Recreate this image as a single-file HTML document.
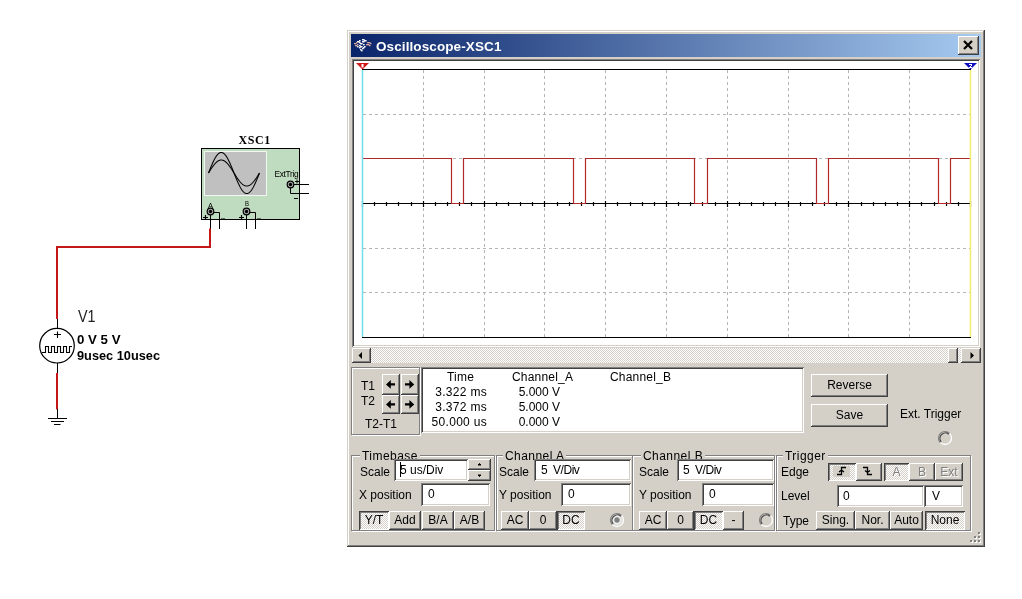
<!DOCTYPE html>
<html><head><meta charset="utf-8"><style>
html,body{margin:0;padding:0;background:#fff;width:1022px;height:599px;overflow:hidden;position:relative;}
.btn,.prs,.sunk,.etch,.dith,.lbl{position:absolute;box-sizing:border-box;}
.btn{background:#d4d0c8;box-shadow:inset -1px -1px #404040, inset 1px 1px #fff, inset -2px -2px #808080;}
.prs{background-color:#e8e6e0;background-image:repeating-conic-gradient(#fff 0 25%, #d4d0c8 0 50%);background-size:2px 2px;box-shadow:inset 1px 1px #404040, inset -1px -1px #fff, inset 2px 2px #808080;}
.dith{background-image:repeating-conic-gradient(#fff 0 25%, #d4d0c8 0 50%);background-size:2px 2px;}
.sunk{background:#fff;box-shadow:inset 1px 1px #808080, inset -1px -1px #fff, inset 2px 2px #404040, inset -2px -2px #d4d0c8;}
.etch{border:1px solid #808080;box-shadow:1px 1px #fff, inset 1px 1px #fff;}
.lbl{will-change:transform;font-family:'Liberation Sans', sans-serif;font-size:12px;line-height:15px;color:#000;white-space:nowrap;}
</style></head><body>
<svg style="position:absolute;left:0;top:0;will-change:transform" width="1022" height="599"><text x="238.5" y="144" font-family="Liberation Serif" font-weight="bold" font-size="12" letter-spacing="0.6" fill="#000">XSC1</text><rect x="201" y="148" width="99" height="72" fill="#c0dcc0"/><rect x="204" y="151" width="63" height="45" fill="#f0f8f0"/><rect x="205" y="152" width="61" height="43" fill="#c0c0c0"/><path d="M208.50,173.00 L209.00,171.74 L209.50,170.48 L210.00,169.23 L210.50,168.00 L211.00,166.79 L211.50,165.59 L212.00,164.43 L212.50,163.30 L213.00,162.21 L213.50,161.16 L214.00,160.15 L214.50,159.19 L215.00,158.28 L215.50,157.43 L216.00,156.64 L216.50,155.91 L217.00,155.25 L217.50,154.65 L218.00,154.12 L218.50,153.67 L219.00,153.28 L219.50,152.97 L220.00,152.74 L220.50,152.59 L221.00,152.51 L221.50,152.51 L222.00,152.59 L222.50,152.74 L223.00,152.97 L223.50,153.28 L224.00,153.67 L224.50,154.12 L225.00,154.65 L225.50,155.25 L226.00,155.91 L226.50,156.64 L227.00,157.43 L227.50,158.28 L228.00,159.19 L228.50,160.15 L229.00,161.16 L229.50,162.21 L230.00,163.30 L230.50,164.43 L231.00,165.59 L231.50,166.79 L232.00,168.00 L232.50,169.23 L233.00,170.48 L233.50,171.74 L234.00,173.00 L234.50,174.26 L235.00,175.52 L235.50,176.77 L236.00,178.00 L236.50,179.21 L237.00,180.41 L237.50,181.57 L238.00,182.70 L238.50,183.79 L239.00,184.84 L239.50,185.85 L240.00,186.81 L240.50,187.72 L241.00,188.57 L241.50,189.36 L242.00,190.09 L242.50,190.75 L243.00,191.35 L243.50,191.88 L244.00,192.33 L244.50,192.72 L245.00,193.03 L245.50,193.26 L246.00,193.41 L246.50,193.49 L247.00,193.49 L247.50,193.41 L248.00,193.26 L248.50,193.03 L249.00,192.72 L249.50,192.33 L250.00,191.88 L250.50,191.35 L251.00,190.75 L251.50,190.09 L252.00,189.36 L252.50,188.57 L253.00,187.72 L253.50,186.81 L254.00,185.85 L254.50,184.84 L255.00,183.79 L255.50,182.70 L256.00,181.57 L256.50,180.41 L257.00,179.21 L257.50,178.00 L258.00,176.77 L258.50,175.52 L259.00,174.26 L259.50,173.00" fill="none" stroke="#000" stroke-width="1.05"/><path d="M208.50,173.00 L209.00,172.20 L209.50,171.40 L210.00,170.61 L210.50,169.83 L211.00,169.06 L211.50,168.30 L212.00,167.57 L212.50,166.85 L213.00,166.16 L213.50,165.49 L214.00,164.85 L214.50,164.24 L215.00,163.67 L215.50,163.13 L216.00,162.63 L216.50,162.16 L217.00,161.74 L217.50,161.36 L218.00,161.03 L218.50,160.74 L219.00,160.50 L219.50,160.30 L220.00,160.15 L220.50,160.06 L221.00,160.01 L221.50,160.01 L222.00,160.06 L222.50,160.15 L223.00,160.30 L223.50,160.50 L224.00,160.74 L224.50,161.03 L225.00,161.36 L225.50,161.74 L226.00,162.16 L226.50,162.63 L227.00,163.13 L227.50,163.67 L228.00,164.24 L228.50,164.85 L229.00,165.49 L229.50,166.16 L230.00,166.85 L230.50,167.57 L231.00,168.30 L231.50,169.06 L232.00,169.83 L232.50,170.61 L233.00,171.40 L233.50,172.20 L234.00,173.00 L234.50,173.80 L235.00,174.60 L235.50,175.39 L236.00,176.17 L236.50,176.94 L237.00,177.70 L237.50,178.43 L238.00,179.15 L238.50,179.84 L239.00,180.51 L239.50,181.15 L240.00,181.76 L240.50,182.33 L241.00,182.87 L241.50,183.37 L242.00,183.84 L242.50,184.26 L243.00,184.64 L243.50,184.97 L244.00,185.26 L244.50,185.50 L245.00,185.70 L245.50,185.85 L246.00,185.94 L246.50,185.99 L247.00,185.99 L247.50,185.94 L248.00,185.85 L248.50,185.70 L249.00,185.50 L249.50,185.26 L250.00,184.97 L250.50,184.64 L251.00,184.26 L251.50,183.84 L252.00,183.37 L252.50,182.87 L253.00,182.33 L253.50,181.76 L254.00,181.15 L254.50,180.51 L255.00,179.84 L255.50,179.15 L256.00,178.43 L256.50,177.70 L257.00,176.94 L257.50,176.17 L258.00,175.39 L258.50,174.60 L259.00,173.80 L259.50,173.00" fill="none" stroke="#000" stroke-width="1.05"/><text x="274.5" y="176.7" font-family="Liberation Sans" font-size="8.3" fill="#000" letter-spacing="-0.3">ExtTrig</text><rect x="201.5" y="148.5" width="98" height="71" fill="none" stroke="#000" stroke-width="1"/><path d="M210.5,211 V229 M213,212.5 H219.5 V229 M246.5,211 V229 M249,212.5 H255.5 V229" stroke="#000" stroke-width="1" fill="none"/><circle cx="210.5" cy="211.5" r="3.3" fill="#a8a8a8" stroke="#000" stroke-width="1.2"/><circle cx="210.5" cy="211.5" r="1.7" fill="#000"/><circle cx="246.5" cy="211.5" r="3.3" fill="#a8a8a8" stroke="#000" stroke-width="1.2"/><circle cx="246.5" cy="211.5" r="1.7" fill="#000"/><path d="M203,217.5 H208 M205.5,215 V220 M221,219 H225 M239,217.5 H244 M241.5,215 V220 M257,219 H261" stroke="#000" stroke-width="1.2"/><text x="208" y="207.5" font-family="Liberation Sans" font-size="7.5" fill="#000">A</text><text x="245" y="206.5" font-family="Liberation Sans" font-size="7.5" fill="#000" transform="translate(245,206.5) scale(0.8,1) translate(-245,-206.5)">B</text><path d="M293,184.5 H309 M290.5,184 V193.5 H309 M294,198.5 H298 M295,181.5 H299 M297,179.5 V183.5" stroke="#000" stroke-width="1" fill="none"/><circle cx="290.5" cy="184.5" r="3.3" fill="#a8a8a8" stroke="#000" stroke-width="1.2"/><circle cx="290.5" cy="184.5" r="1.7" fill="#000"/><path d="M57,319 V247 H210 V228.5" stroke="#c41818" stroke-width="2" fill="none"/><path d="M57,373 V409.5" stroke="#c41818" stroke-width="2" fill="none"/><path d="M57.5,319 V329 M57.5,363 V373 M57.5,409 V418.5 M48,418.5 H67 M51,421.5 H64 M54,424.5 H60.5" stroke="#000" stroke-width="1" fill="none"/><circle cx="57" cy="345.7" r="17.3" fill="#fff" stroke="#000" stroke-width="1.2"/><path d="M54,334.5 H61 M57.5,331.5 V338" stroke="#000" stroke-width="1.1"/><path d="M42,352.5 H45.5 V346.5 H48.5 V352.5 H51.5 V346.5 H54.5 V352.5 H57.5 V346.5 H60.5 V352.5 H63.5 V346.5 H66.5 V352.5 H69.5 V346.5 H72" stroke="#000" stroke-width="1.1" fill="none"/><text x="78" y="322" font-family="Liberation Sans" font-size="16.5" fill="#222" textLength="17.5" lengthAdjust="spacingAndGlyphs">V1</text><text x="77" y="343.5" font-family="Liberation Sans" font-weight="bold" font-size="13.5" fill="#000" textLength="43.5" lengthAdjust="spacingAndGlyphs">0 V 5 V</text><text x="77" y="359.5" font-family="Liberation Sans" font-weight="bold" font-size="13.5" fill="#000" textLength="83" lengthAdjust="spacingAndGlyphs">9usec 10usec</text></svg>
<div style="position:absolute;left:347px;top:30px;width:638px;height:517px;background:#d4d0c8;box-shadow:inset -1px -1px #404040, inset 1px 1px #d4d0c8, inset -2px -2px #808080, inset 2px 2px #fff;"></div>
<div style="position:absolute;left:351px;top:34px;width:630px;height:23px;background:linear-gradient(to right,#0a246a,#a6caf0);"></div>
<div style="will-change:transform;position:absolute;left:376px;top:35.5px;height:22px;line-height:22px;font-family:'Liberation Sans', sans-serif;font-size:13.5px;font-weight:bold;letter-spacing:0.1px;color:#fff;white-space:nowrap;">Oscilloscope-XSC1</div>
<svg style="position:absolute;left:352px;top:36px" width="24" height="18"><rect x="10" y="3" width="1.6" height="1.4" fill="#fff"/><rect x="11" y="3" width="1.6" height="1.4" fill="#fff"/><rect x="5" y="5" width="1.6" height="1.4" fill="#fff"/><rect x="6" y="5" width="1.6" height="1.4" fill="#fff"/><rect x="7" y="4" width="1.6" height="1.4" fill="#fff"/><rect x="10" y="5" width="1.6" height="1.4" fill="#fff"/><rect x="11" y="5" width="1.6" height="1.4" fill="#fff"/><rect x="12" y="4" width="1.6" height="1.4" fill="#fff"/><rect x="13" y="4" width="1.6" height="1.4" fill="#fff"/><rect x="7" y="6" width="1.6" height="1.4" fill="#fff"/><rect x="8" y="7" width="1.6" height="1.4" fill="#fff"/><rect x="9" y="7" width="1.6" height="1.4" fill="#fff"/><rect x="11" y="8" width="1.6" height="1.4" fill="#fff"/><rect x="7" y="9" width="1.6" height="1.4" fill="#fff"/><rect x="5" y="10" width="1.6" height="1.4" fill="#fff"/><rect x="8" y="10" width="1.6" height="1.4" fill="#fff"/><rect x="9" y="10" width="1.6" height="1.4" fill="#fff"/><rect x="12" y="10" width="1.6" height="1.4" fill="#fff"/><rect x="7" y="11" width="1.6" height="1.4" fill="#fff"/><rect x="10" y="12" width="1.6" height="1.4" fill="#fff"/><rect x="11" y="11" width="1.6" height="1.4" fill="#fff"/><rect x="8" y="13" width="1.6" height="1.4" fill="#fff"/><rect x="9" y="14" width="1.6" height="1.4" fill="#fff"/><rect x="2" y="7" width="1.5" height="1.3" fill="#d8a8a0"/><rect x="3" y="7" width="1.5" height="1.3" fill="#d8a8a0"/><rect x="4" y="6" width="1.5" height="1.3" fill="#d8a8a0"/><rect x="5" y="8" width="1.5" height="1.3" fill="#d8a8a0"/><rect x="3" y="9" width="1.5" height="1.3" fill="#d8a8a0"/><rect x="4" y="9" width="1.5" height="1.3" fill="#d8a8a0"/><rect x="15" y="6" width="1.5" height="1.3" fill="#d8a8a0"/><rect x="16" y="6" width="1.5" height="1.3" fill="#d8a8a0"/><rect x="17" y="6" width="1.5" height="1.3" fill="#d8a8a0"/><rect x="18" y="7" width="1.5" height="1.3" fill="#d8a8a0"/><rect x="14" y="8" width="1.5" height="1.3" fill="#d8a8a0"/><rect x="15" y="8" width="1.5" height="1.3" fill="#d8a8a0"/><rect x="16" y="8" width="1.5" height="1.3" fill="#d8a8a0"/><rect x="17" y="9" width="1.5" height="1.3" fill="#d8a8a0"/></svg>
<div class="btn" style="left:958px;top:36px;width:21px;height:19px;"></div>
<svg style="position:absolute;left:958px;top:36px" width="21" height="19"><path d="M6,5 L14,13 M14,5 L6,13" stroke="#000" stroke-width="2.2"/></svg>
<div class="sunk" style="left:352px;top:59px;width:628px;height:288px;"></div>
<svg style="position:absolute;left:0;top:0" width="1022" height="599"><line x1="423.5" y1="70" x2="423.5" y2="337" stroke="#b4b4b4" stroke-width="1" stroke-dasharray="3,3"/><line x1="484.5" y1="70" x2="484.5" y2="337" stroke="#b4b4b4" stroke-width="1" stroke-dasharray="3,3"/><line x1="544.5" y1="70" x2="544.5" y2="337" stroke="#b4b4b4" stroke-width="1" stroke-dasharray="3,3"/><line x1="605.5" y1="70" x2="605.5" y2="337" stroke="#b4b4b4" stroke-width="1" stroke-dasharray="3,3"/><line x1="666.5" y1="70" x2="666.5" y2="337" stroke="#b4b4b4" stroke-width="1" stroke-dasharray="3,3"/><line x1="727.5" y1="70" x2="727.5" y2="337" stroke="#b4b4b4" stroke-width="1" stroke-dasharray="3,3"/><line x1="788.5" y1="70" x2="788.5" y2="337" stroke="#b4b4b4" stroke-width="1" stroke-dasharray="3,3"/><line x1="848.5" y1="70" x2="848.5" y2="337" stroke="#b4b4b4" stroke-width="1" stroke-dasharray="3,3"/><line x1="909.5" y1="70" x2="909.5" y2="337" stroke="#b4b4b4" stroke-width="1" stroke-dasharray="3,3"/><line x1="363" y1="114.5" x2="970" y2="114.5" stroke="#b4b4b4" stroke-width="1" stroke-dasharray="3,3"/><line x1="363" y1="158.5" x2="970" y2="158.5" stroke="#b4b4b4" stroke-width="1" stroke-dasharray="3,3"/><line x1="363" y1="248.5" x2="970" y2="248.5" stroke="#b4b4b4" stroke-width="1" stroke-dasharray="3,3"/><line x1="363" y1="292.5" x2="970" y2="292.5" stroke="#b4b4b4" stroke-width="1" stroke-dasharray="3,3"/><line x1="362" y1="69.5" x2="971" y2="69.5" stroke="#000" stroke-width="1"/><line x1="362" y1="337.5" x2="971" y2="337.5" stroke="#000" stroke-width="1"/><line x1="362" y1="203.5" x2="971" y2="203.5" stroke="#000" stroke-width="1"/><path d="M362.5,201 V207 M374.5,202 V206 M386.5,202 V206 M398.5,202 V206 M411.5,202 V206 M423.5,201 V207 M435.5,202 V206 M447.5,202 V206 M459.5,202 V206 M471.5,202 V206 M484.5,201 V207 M496.5,202 V206 M508.5,202 V206 M520.5,202 V206 M532.5,202 V206 M544.5,201 V207 M557.5,202 V206 M569.5,202 V206 M581.5,202 V206 M593.5,202 V206 M605.5,201 V207 M617.5,202 V206 M630.5,202 V206 M642.5,202 V206 M654.5,202 V206 M666.5,201 V207 M678.5,202 V206 M690.5,202 V206 M702.5,202 V206 M715.5,202 V206 M727.5,201 V207 M739.5,202 V206 M751.5,202 V206 M763.5,202 V206 M775.5,202 V206 M788.5,201 V207 M800.5,202 V206 M812.5,202 V206 M824.5,202 V206 M836.5,202 V206 M848.5,201 V207 M861.5,202 V206 M873.5,202 V206 M885.5,202 V206 M897.5,202 V206 M909.5,201 V207 M921.5,202 V206 M934.5,202 V206 M946.5,202 V206 M958.5,202 V206 M970.5,201 V207" stroke="#000" stroke-width="1.2"/><path d="M363,158.5 H451.5 V203.5 H463.5 V158.5 H573.5 V203.5 H585.5 V158.5 H694.5 V203.5 H707.5 V158.5 H816.5 V203.5 H828.5 V158.5 H938.5 V203.5 H950.5 V158.5 H970" stroke="#b02828" stroke-width="1.2" fill="none"/><line x1="362.5" y1="70" x2="362.5" y2="337" stroke="#70e0e8" stroke-width="1.5"/><line x1="970.5" y1="70" x2="970.5" y2="337" stroke="#f4ec70" stroke-width="1.5"/><path d="M356,63 H369 L362.5,69.5 Z" fill="#d01818"/><rect x="361.5" y="64" width="2" height="3.5" fill="#fff"/><path d="M964,63 H977 L970.5,69.5 Z" fill="#1010c0"/><path d="M969,64.5 H972 M971.5,64.5 V66 M970.5,66 V67 M969,67.5 H972" stroke="#fff" stroke-width="1"/></svg>
<div class="dith" style="left:352px;top:348px;width:629px;height:15px;"></div>
<div class="btn" style="left:352px;top:348px;width:19px;height:15px;"></div>
<svg style="position:absolute;left:352px;top:348px" width="19" height="15"><path d="M6.5,7.5 L10,4 V11 Z" fill="#000"/></svg>
<div class="btn" style="left:948px;top:348px;width:10px;height:15px;"></div>
<div class="btn" style="left:961px;top:348px;width:20px;height:15px;"></div>
<svg style="position:absolute;left:961px;top:348px" width="20" height="15"><path d="M13,7.5 L9.5,4 V11 Z" fill="#000"/></svg>
<div class="etch" style="left:351px;top:367px;width:69px;height:68px;"></div>
<div class="lbl" style="left:361px;top:379px;">T1</div>
<div class="lbl" style="left:361px;top:394px;">T2</div>
<div class="lbl" style="left:365px;top:417px;">T2-T1</div>
<div class="btn" style="left:382px;top:374px;width:18px;height:21px;"></div>
<svg style="position:absolute;left:382px;top:374px" width="19" height="20"><path d="M4,10.4 L8.8,6 V9.2 H13 V11.6 H8.8 V14.8 Z" fill="#000"/></svg>
<div class="btn" style="left:401px;top:374px;width:18px;height:21px;"></div>
<svg style="position:absolute;left:401px;top:374px" width="19" height="20"><path d="M13.2,10.4 L8.4,6 V9.2 H4 V11.6 H8.4 V14.8 Z" fill="#000"/></svg>
<div class="btn" style="left:382px;top:395px;width:18px;height:19px;"></div>
<svg style="position:absolute;left:382px;top:394px" width="19" height="20"><path d="M4,10.4 L8.8,6 V9.2 H13 V11.6 H8.8 V14.8 Z" fill="#000"/></svg>
<div class="btn" style="left:401px;top:395px;width:18px;height:19px;"></div>
<svg style="position:absolute;left:401px;top:394px" width="19" height="20"><path d="M13.2,10.4 L8.4,6 V9.2 H4 V11.6 H8.4 V14.8 Z" fill="#000"/></svg>
<div class="sunk" style="left:421px;top:367px;width:383px;height:66px;"></div>
<div class="lbl" style="left:447px;top:370px;letter-spacing:0.2px;">Time</div>
<div class="lbl" style="left:512px;top:370px;letter-spacing:0.2px;">Channel_A</div>
<div class="lbl" style="left:610px;top:370px;letter-spacing:0.2px;">Channel_B</div>
<div class="lbl" style="left:336.5px;width:150px;text-align:right;top:385px;letter-spacing:0.3px;">3.322 ms</div>
<div class="lbl" style="left:410px;width:150px;text-align:right;top:385px;">5.000 V</div>
<div class="lbl" style="left:336.5px;width:150px;text-align:right;top:400px;letter-spacing:0.3px;">3.372 ms</div>
<div class="lbl" style="left:410px;width:150px;text-align:right;top:400px;">5.000 V</div>
<div class="lbl" style="left:336.5px;width:150px;text-align:right;top:415px;letter-spacing:0.3px;">50.000 us</div>
<div class="lbl" style="left:410px;width:150px;text-align:right;top:415px;">0.000 V</div>
<div class="btn" style="left:811px;top:374px;width:77px;height:23px;"></div>
<div class="lbl" style="left:811px;top:374px;width:77px;height:23px;line-height:23px;text-align:center;color:#000;">Reverse</div>
<div class="btn" style="left:811px;top:404px;width:77px;height:23px;"></div>
<div class="lbl" style="left:811px;top:404px;width:77px;height:23px;line-height:23px;text-align:center;color:#000;">Save</div>
<div class="lbl" style="left:900px;top:407px;">Ext. Trigger</div>
<svg style="position:absolute;left:937px;top:430px" width="16" height="16"><path d="M3.4,12.6 A6.5,6.5 0 0 1 12.6,3.4" stroke="#808080" stroke-width="1.2" fill="none"/><path d="M4.2,11.8 A5.4,5.4 0 0 1 11.8,4.2" stroke="#404040" stroke-width="1.2" fill="none"/><path d="M12.6,3.4 A6.5,6.5 0 0 1 3.4,12.6" stroke="#fff" stroke-width="1.3" fill="none"/></svg>
<div class="etch" style="left:351px;top:455px;width:144px;height:76px;"></div>
<div class="lbl" style="left:360px;top:449px;padding:0 2px;background:#d4d0c8;letter-spacing:0.45px;">Timebase</div>
<div class="etch" style="left:496px;top:455px;width:137px;height:76px;"></div>
<div class="lbl" style="left:503px;top:449px;padding:0 2px;background:#d4d0c8;letter-spacing:0.45px;">Channel A</div>
<div class="etch" style="left:632px;top:455px;width:143px;height:76px;"></div>
<div class="lbl" style="left:641px;top:449px;padding:0 2px;background:#d4d0c8;letter-spacing:0.45px;">Channel B</div>
<div class="etch" style="left:776px;top:455px;width:195px;height:76px;"></div>
<div class="lbl" style="left:783px;top:449px;padding:0 2px;background:#d4d0c8;letter-spacing:0.45px;">Trigger</div>
<div class="lbl" style="left:360px;top:465px;">Scale</div>
<div class="sunk" style="left:394px;top:459px;width:74px;height:22px;"></div>
<div class="lbl" style="left:400px;top:463px;">5 us/Div</div>
<div style="position:absolute;left:400px;top:462px;width:1px;height:15px;background:#000"></div>
<div class="btn" style="left:468px;top:459px;width:23px;height:11px;"></div>
<div class="btn" style="left:468px;top:470px;width:23px;height:11px;"></div>
<svg style="position:absolute;left:468px;top:459px" width="23" height="22"><path d="M10,6 H13 L11.5,4.5Z M10,16 H13 L11.5,17.5Z" fill="#000" stroke="#000" stroke-width="1"/></svg>
<div class="lbl" style="left:359px;top:488px;">X position</div>
<div class="sunk" style="left:421px;top:483px;width:69px;height:23px;"></div>
<div class="lbl" style="left:428px;top:487px;">0</div>
<div class="prs" style="left:359px;top:511px;width:30px;height:19px;"></div>
<div class="lbl" style="left:359px;top:511px;width:30px;height:19px;line-height:19px;text-align:center;color:#000;">Y/T</div>
<div class="btn" style="left:389px;top:511px;width:32px;height:19px;"></div>
<div class="lbl" style="left:389px;top:511px;width:32px;height:19px;line-height:19px;text-align:center;color:#000;">Add</div>
<div class="btn" style="left:422px;top:511px;width:32px;height:19px;"></div>
<div class="lbl" style="left:422px;top:511px;width:32px;height:19px;line-height:19px;text-align:center;color:#000;">B/A</div>
<div class="btn" style="left:454px;top:511px;width:31px;height:19px;"></div>
<div class="lbl" style="left:454px;top:511px;width:31px;height:19px;line-height:19px;text-align:center;color:#000;">A/B</div>
<div class="lbl" style="left:499px;top:465px;">Scale</div>
<div class="sunk" style="left:534px;top:459px;width:97px;height:22px;"></div>
<div class="lbl" style="left:541px;top:463px;">5</div>
<div class="lbl" style="left:553px;top:463px;letter-spacing:-0.45px;">V/Div</div>
<div class="lbl" style="left:499px;top:488px;">Y position</div>
<div class="sunk" style="left:561px;top:483px;width:70px;height:23px;"></div>
<div class="lbl" style="left:568px;top:487px;">0</div>
<div class="btn" style="left:501px;top:511px;width:28px;height:19px;"></div>
<div class="lbl" style="left:501px;top:511px;width:28px;height:19px;line-height:19px;text-align:center;color:#000;">AC</div>
<div class="btn" style="left:529px;top:511px;width:28px;height:19px;"></div>
<div class="lbl" style="left:529px;top:511px;width:28px;height:19px;line-height:19px;text-align:center;color:#000;">0</div>
<div class="prs" style="left:557px;top:511px;width:28px;height:19px;"></div>
<div class="lbl" style="left:557px;top:511px;width:28px;height:19px;line-height:19px;text-align:center;color:#000;">DC</div>
<svg style="position:absolute;left:609px;top:512px" width="16" height="16"><circle cx="8" cy="8" r="5" fill="#ececec"/><path d="M3.4,12.6 A6.5,6.5 0 0 1 12.6,3.4" stroke="#808080" stroke-width="1.2" fill="none"/><path d="M4.2,11.8 A5.4,5.4 0 0 1 11.8,4.2" stroke="#404040" stroke-width="1.2" fill="none"/><path d="M12.6,3.4 A6.5,6.5 0 0 1 3.4,12.6" stroke="#fff" stroke-width="1.3" fill="none"/><circle cx="8" cy="8" r="2.7" fill="#808080"/></svg>
<div class="lbl" style="left:639px;top:465px;">Scale</div>
<div class="sunk" style="left:677px;top:459px;width:97px;height:22px;"></div>
<div class="lbl" style="left:683px;top:463px;">5</div>
<div class="lbl" style="left:695px;top:463px;letter-spacing:-0.45px;">V/Div</div>
<div class="lbl" style="left:639px;top:488px;">Y position</div>
<div class="sunk" style="left:702px;top:483px;width:72px;height:23px;"></div>
<div class="lbl" style="left:709px;top:487px;">0</div>
<div class="btn" style="left:639px;top:511px;width:28px;height:19px;"></div>
<div class="lbl" style="left:639px;top:511px;width:28px;height:19px;line-height:19px;text-align:center;color:#000;">AC</div>
<div class="btn" style="left:667px;top:511px;width:27px;height:19px;"></div>
<div class="lbl" style="left:667px;top:511px;width:27px;height:19px;line-height:19px;text-align:center;color:#000;">0</div>
<div class="prs" style="left:694px;top:511px;width:29px;height:19px;"></div>
<div class="lbl" style="left:694px;top:511px;width:29px;height:19px;line-height:19px;text-align:center;color:#000;">DC</div>
<div class="btn" style="left:723px;top:511px;width:21px;height:19px;"></div>
<div class="lbl" style="left:723px;top:511px;width:21px;height:19px;line-height:19px;text-align:center;color:#000;">-</div>
<svg style="position:absolute;left:758px;top:512px" width="16" height="16"><path d="M3.4,12.6 A6.5,6.5 0 0 1 12.6,3.4" stroke="#808080" stroke-width="1.2" fill="none"/><path d="M4.2,11.8 A5.4,5.4 0 0 1 11.8,4.2" stroke="#404040" stroke-width="1.2" fill="none"/><path d="M12.6,3.4 A6.5,6.5 0 0 1 3.4,12.6" stroke="#fff" stroke-width="1.3" fill="none"/></svg>
<div class="lbl" style="left:781px;top:465px;">Edge</div>
<div class="prs" style="left:828px;top:463px;width:28px;height:18px;"></div>
<div style="position:absolute;left:833px;top:466px;width:17px;height:11px;background:#d4d0c8"></div>
<svg style="position:absolute;left:828px;top:463px" width="28" height="18"><path d="M9,11.5 H13.5 V4.5 H18 M11,9 L13.5,7 L16,9" stroke="#000" stroke-width="1.3" fill="none"/></svg>
<div class="btn" style="left:856px;top:463px;width:26px;height:18px;"></div>
<svg style="position:absolute;left:856px;top:463px" width="26" height="18"><path d="M7,4.5 H11.5 V11.5 H16 M9,7.5 L11.5,9.5 L14,7.5" stroke="#000" stroke-width="1.3" fill="none"/></svg>
<div class="prs" style="left:884px;top:463px;width:25px;height:18px;"></div>
<div class="lbl" style="left:884px;top:463px;width:25px;height:18px;line-height:18px;text-align:center;color:#808080;text-shadow:1px 1px #fff;">A</div>
<div class="btn" style="left:909px;top:463px;width:26px;height:18px;"></div>
<div class="lbl" style="left:909px;top:463px;width:26px;height:18px;line-height:18px;text-align:center;color:#808080;text-shadow:1px 1px #fff;">B</div>
<div class="btn" style="left:935px;top:463px;width:28px;height:18px;"></div>
<div class="lbl" style="left:935px;top:463px;width:28px;height:18px;line-height:18px;text-align:center;color:#808080;text-shadow:1px 1px #fff;">Ext</div>
<div class="lbl" style="left:781px;top:489px;">Level</div>
<div class="sunk" style="left:837px;top:485px;width:87px;height:22px;"></div>
<div class="lbl" style="left:843px;top:489px;">0</div>
<div class="sunk" style="left:924px;top:485px;width:39px;height:22px;"></div>
<div class="lbl" style="left:932px;top:489px;">V</div>
<div class="lbl" style="left:783px;top:514px;">Type</div>
<div class="btn" style="left:816px;top:511px;width:39px;height:19px;"></div>
<div class="lbl" style="left:816px;top:511px;width:39px;height:19px;line-height:19px;text-align:center;color:#000;">Sing.</div>
<div class="btn" style="left:855px;top:511px;width:35px;height:19px;"></div>
<div class="lbl" style="left:855px;top:511px;width:35px;height:19px;line-height:19px;text-align:center;color:#000;">Nor.</div>
<div class="btn" style="left:890px;top:511px;width:33px;height:19px;"></div>
<div class="lbl" style="left:890px;top:511px;width:33px;height:19px;line-height:19px;text-align:center;color:#000;">Auto</div>
<div class="prs" style="left:925px;top:511px;width:40px;height:19px;"></div>
<div class="lbl" style="left:925px;top:511px;width:40px;height:19px;line-height:19px;text-align:center;color:#000;">None</div>
<svg style="position:absolute;left:966px;top:530px" width="16" height="16"><rect x="13" y="3" width="2" height="2" fill="#fff"/><rect x="12" y="2" width="2" height="2" fill="#808080"/><rect x="9" y="7" width="2" height="2" fill="#fff"/><rect x="8" y="6" width="2" height="2" fill="#808080"/><rect x="13" y="7" width="2" height="2" fill="#fff"/><rect x="12" y="6" width="2" height="2" fill="#808080"/><rect x="5" y="11" width="2" height="2" fill="#fff"/><rect x="4" y="10" width="2" height="2" fill="#808080"/><rect x="9" y="11" width="2" height="2" fill="#fff"/><rect x="8" y="10" width="2" height="2" fill="#808080"/><rect x="13" y="11" width="2" height="2" fill="#fff"/><rect x="12" y="10" width="2" height="2" fill="#808080"/></svg>
</body></html>
